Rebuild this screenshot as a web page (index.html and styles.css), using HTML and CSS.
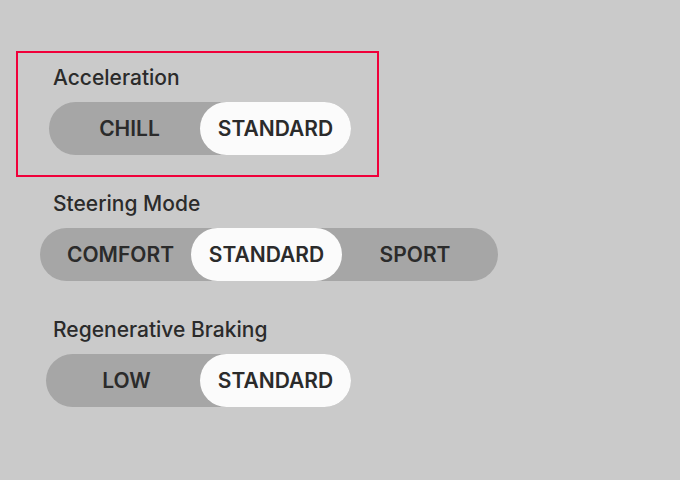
FILE: index.html
```html
<!DOCTYPE html>
<html lang="en">
<head>
    <meta charset="UTF-8">
    <title>Driving settings</title>
    <link rel="stylesheet" href="styles.css">
</head>
<body>
    <div class="settings">
        <section class="setting selected">
            <div class="setting-label">Acceleration</div>
            <div class="segmented seg-accel">
                <button>CHILL</button>
                <button class="on">STANDARD</button>
            </div>
        </section>

        <section class="setting">
            <div class="setting-label">Steering Mode</div>
            <div class="segmented seg-steer">
                <button>COMFORT</button>
                <button class="on">STANDARD</button>
                <button>SPORT</button>
            </div>
        </section>

        <section class="setting">
            <div class="setting-label">Regenerative Braking</div>
            <div class="segmented seg-regen">
                <button>LOW</button>
                <button class="on">STANDARD</button>
            </div>
        </section>
    </div>
</body>
</html>
```

FILE: styles.css
```css
body {
    margin: 0;
    background-color: #cacaca;
    font-family: 'Inter', 'Noto Sans', sans-serif;
    color: #2b2b2b;
}
.settings {
    padding-top: 51px;
    padding-left: 16px;
}
.setting {
    box-sizing: border-box;
    width: 363px;
    height: 126px;
    border: 2px solid transparent;
    padding: 13px 0 0 35px;
}
.setting.selected {
    border-color: #f0003a;
}
.setting-label {
    font-size: 21px;
    line-height: 24px;
    font-weight: 500;
    margin-bottom: 12px;
}
.segmented {
    display: inline-flex;
    background-color: #a6a6a6;
    border-radius: 27px;
}
.segmented button {
    box-sizing: border-box;
    width: 151px;
    height: 53px;
    border: none;
    border-radius: 27px;
    background: none;
    font-family: inherit;
    font-size: 21px;
    font-weight: 600;
    color: #2b2b2b;
    padding: 0;
}
.segmented button:first-child:not(.on) {
    padding-left: 10px;
}
.segmented button:last-child:not(.on) {
    width: 156px;
    padding-right: 10px;
}
.segmented button.on {
    background-color: #fbfbfb;
}
.seg-accel {
    margin-left: -4px;
}
.seg-steer {
    margin-left: -13px;
}
.seg-regen {
    margin-left: -7px;
    padding-left: 3px;
}
.seg-regen button:first-child:not(.on) {
    padding-left: 4px;
}
```
